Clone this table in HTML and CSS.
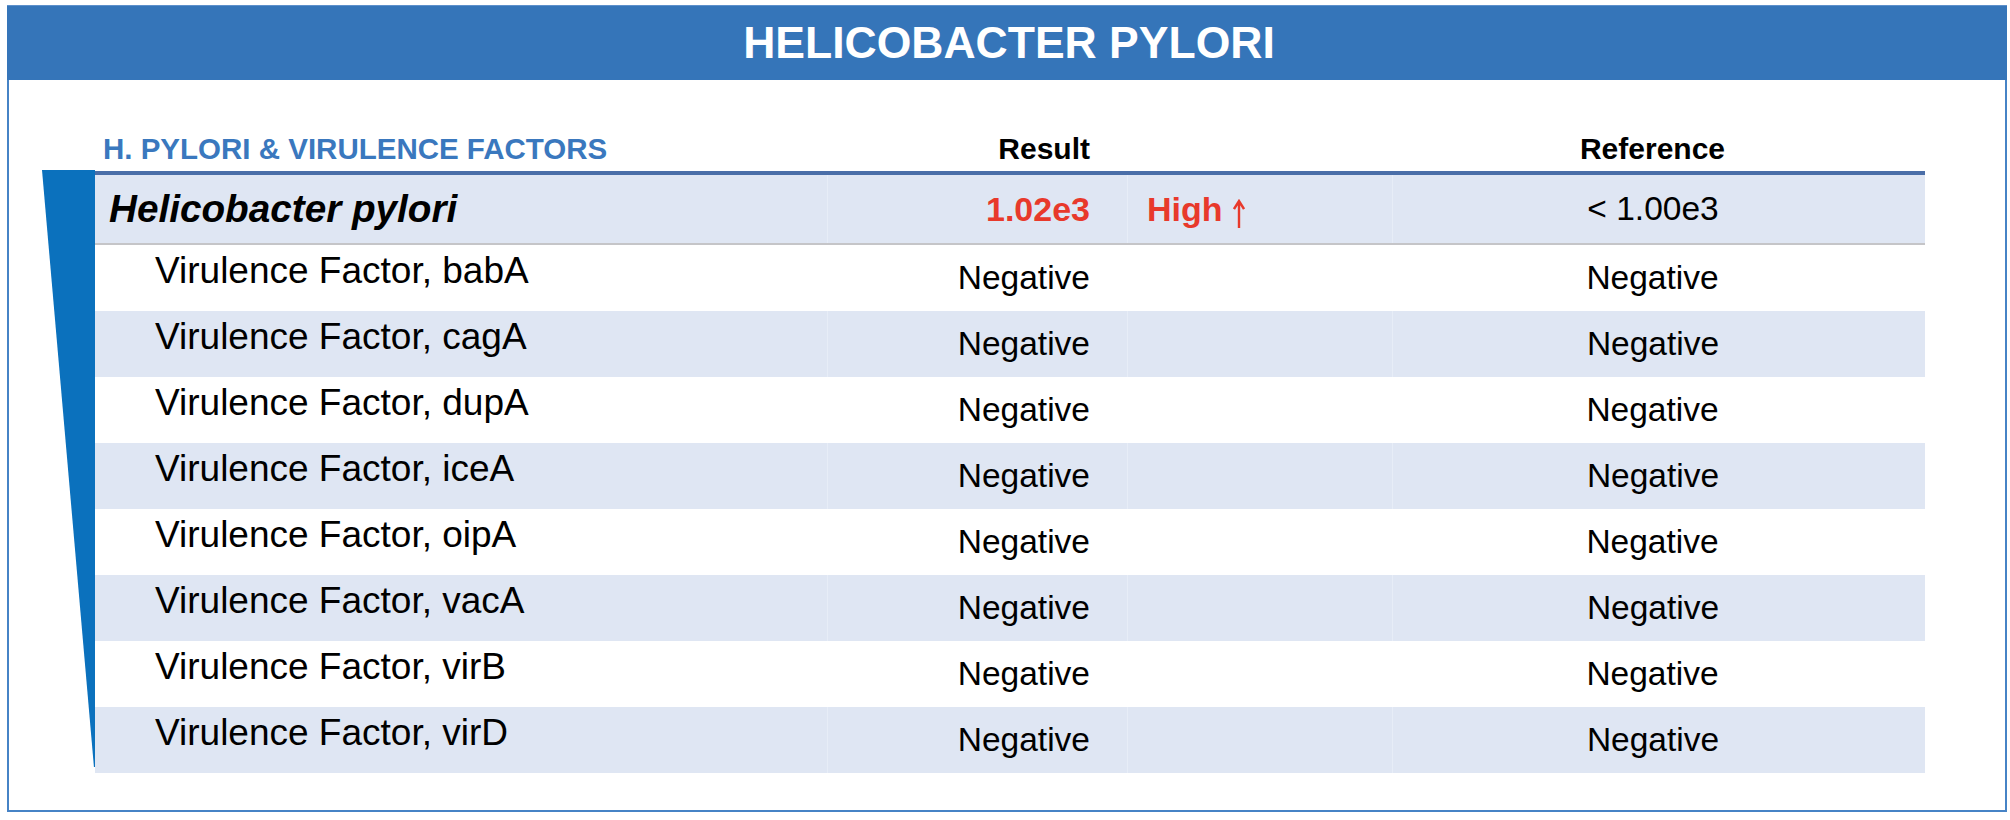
FILE: index.html
```html
<!DOCTYPE html>
<html lang="en">
<head>
<meta charset="utf-8">
<title>Helicobacter pylori</title>
<link rel="stylesheet" href="styles.css">
</head>
<body>
<div class="panel">
  <div class="title-bar">HELICOBACTER PYLORI</div>
  <div class="content">
    <div class="wedge"></div>
    <div class="table">
      <div class="row head">
        <div class="cell name section">H. PYLORI &amp; VIRULENCE FACTORS</div>
        <div class="cell result">Result</div>
        <div class="cell flag"></div>
        <div class="cell ref">Reference</div>
      </div>
      <div class="row main shaded">
        <div class="cell name organism">Helicobacter pylori</div>
        <div class="cell result high">1.02e3</div>
        <div class="cell flag high"><span class="flag-text">High</span><svg class="arrow" width="12" height="29" viewBox="0 0 12 29" aria-label="↑"><path d="M6 29 V2 M1 10 L6 2 L11 10" fill="none" stroke="#e8392b" stroke-width="2.4" stroke-linejoin="miter"/></svg></div>
        <div class="cell ref">&lt; 1.00e3</div>
      </div>
      <div class="row">
        <div class="cell name factor">Virulence Factor, babA</div>
        <div class="cell result">Negative</div>
        <div class="cell flag"></div>
        <div class="cell ref">Negative</div>
      </div>
      <div class="row shaded">
        <div class="cell name factor">Virulence Factor, cagA</div>
        <div class="cell result">Negative</div>
        <div class="cell flag"></div>
        <div class="cell ref">Negative</div>
      </div>
      <div class="row">
        <div class="cell name factor">Virulence Factor, dupA</div>
        <div class="cell result">Negative</div>
        <div class="cell flag"></div>
        <div class="cell ref">Negative</div>
      </div>
      <div class="row shaded">
        <div class="cell name factor">Virulence Factor, iceA</div>
        <div class="cell result">Negative</div>
        <div class="cell flag"></div>
        <div class="cell ref">Negative</div>
      </div>
      <div class="row">
        <div class="cell name factor">Virulence Factor, oipA</div>
        <div class="cell result">Negative</div>
        <div class="cell flag"></div>
        <div class="cell ref">Negative</div>
      </div>
      <div class="row shaded">
        <div class="cell name factor">Virulence Factor, vacA</div>
        <div class="cell result">Negative</div>
        <div class="cell flag"></div>
        <div class="cell ref">Negative</div>
      </div>
      <div class="row">
        <div class="cell name factor">Virulence Factor, virB</div>
        <div class="cell result">Negative</div>
        <div class="cell flag"></div>
        <div class="cell ref">Negative</div>
      </div>
      <div class="row shaded">
        <div class="cell name factor">Virulence Factor, virD</div>
        <div class="cell result">Negative</div>
        <div class="cell flag"></div>
        <div class="cell ref">Negative</div>
      </div>
    </div>
  </div>
</div>
</body>
</html>
```
FILE: styles.css
```css
* {
  box-sizing: border-box;
}

html, body {
  margin: 0;
  padding: 0;
  background: #ffffff;
}

body {
  font-family: "Liberation Sans", Arial, sans-serif;
  color: #000000;
}

.panel {
  margin: 5px 0 0 7px;
  width: 2000px;
  height: 807px;
  border: 2px solid #4683c6;
  border-top: 0;
}

.title-bar {
  height: 75px;
  margin: 0 -2px;
  background: #3575b9;
  border-top: 1px solid #5d90cb;
  color: #ffffff;
  font-weight: bold;
  font-size: 44.5px;
  display: flex;
  align-items: center;
  justify-content: center;
  padding-left: 4px;
}

.content {
  display: flex;
  margin: 52px 0 0 33px;
}

.wedge {
  width: 53px;
  margin-top: 38px;
  background: #0b71bd;
  clip-path: polygon(0 0, 100% 0, 100% 99%, 98% 99%);
}

.table {
  width: 1830px;
}

.row {
  display: grid;
  grid-template-columns: 732px 300px 265px 533px;
  height: 66px;
}

.row.shaded {
  background: #dfe6f3;
}

.row.head {
  height: 39px;
  align-items: end;
  padding-bottom: 6px;
  line-height: 32px;
  font-weight: bold;
}

.row.main {
  height: 74px;
  border-top: 4px solid #4a6ea8;
  border-bottom: 2px solid #c5c5c8;
}

.cell {
  display: flex;
  align-items: center;
  height: 100%;
  font-size: 33.5px;
  white-space: nowrap;
}

.row.shaded .cell + .cell {
  border-left: 1px solid #e7edf7;
}

.row.head .cell {
  height: auto;
  font-size: 30px;
  align-items: flex-end;
}

.name {
  padding-left: 60px;
}

.row.head .section.name {
  padding-left: 8px;
  color: #3a78be;
  font-size: 29.5px;
}

.organism.name {
  padding-left: 14px;
  font-size: 38.7px;
  font-weight: bold;
  font-style: italic;
}

.factor.name {
  font-size: 37px;
  padding-bottom: 14px;
}

.result {
  justify-content: flex-end;
  padding-right: 37px;
}

.flag {
  padding-left: 19px;
}

.ref {
  justify-content: center;
  padding-right: 12px;
}

.high {
  color: #e8392b;
  font-weight: bold;
  font-size: 34px;
}

.flag.high {
  gap: 10px;
}

.arrow {
  display: block;
  margin-top: 8px;
}
```
